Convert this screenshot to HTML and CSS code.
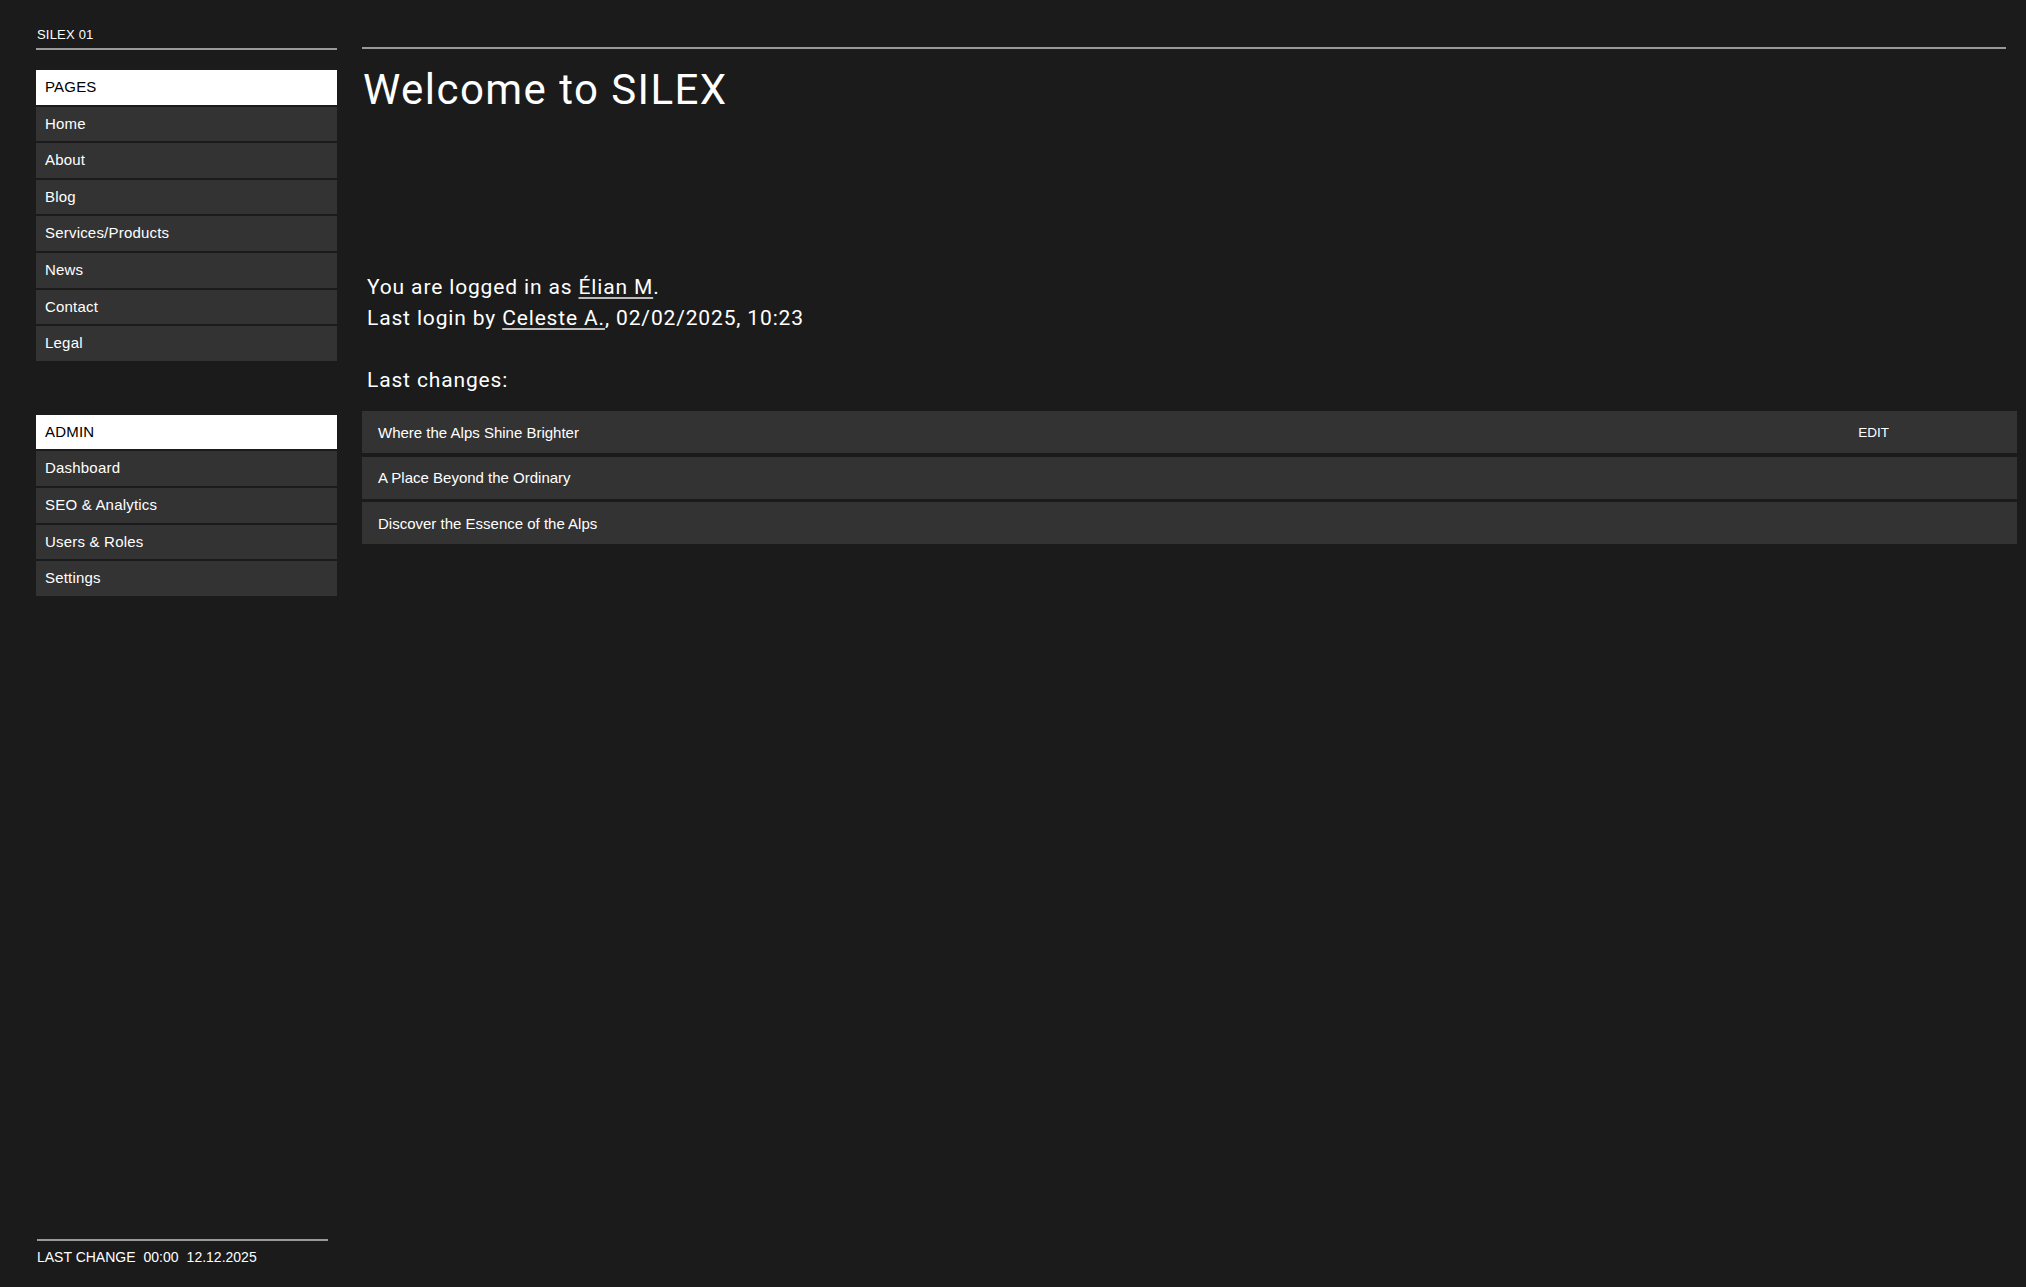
FILE: index.html
```html
<!DOCTYPE html>
<html lang="en">
<head>
<meta charset="utf-8">
<title>SILEX</title>
<link rel="stylesheet" href="styles.css">
</head>
<body>
<aside class="sidebar">
  <div class="brand">SILEX 01</div>
  <nav class="group">
    <div class="group-head">PAGES</div>
    <a class="item" href="#">Home</a>
    <a class="item" href="#">About</a>
    <a class="item" href="#">Blog</a>
    <a class="item" href="#">Services/Products</a>
    <a class="item" href="#">News</a>
    <a class="item" href="#">Contact</a>
    <a class="item" href="#">Legal</a>
  </nav>
  <nav class="group group-admin">
    <div class="group-head">ADMIN</div>
    <a class="item" href="#">Dashboard</a>
    <a class="item" href="#">SEO &amp; Analytics</a>
    <a class="item" href="#">Users &amp; Roles</a>
    <a class="item" href="#">Settings</a>
  </nav>
  <footer class="foot">
    <span>LAST CHANGE</span>
    <span>00:00</span>
    <span>12.12.2025</span>
  </footer>
</aside>
<main class="main">
  <div class="rule"></div>
  <h1 class="title">Welcome to SILEX</h1>
  <div class="info">
    <p>You are logged in as <a href="#">Élian M</a>.</p>
    <p>Last login by <a href="#">Celeste A.</a>, 02/02/2025, 10:23</p>
    <p class="changes">Last changes:</p>
  </div>
  <ul class="rows">
    <li class="row"><span>Where the Alps Shine Brighter</span><span class="edit">EDIT</span></li>
    <li class="row"><span>A Place Beyond the Ordinary</span></li>
    <li class="row"><span>Discover the Essence of the Alps</span></li>
  </ul>
</main>
</body>
</html>
```

FILE: styles.css
```css
* { box-sizing: border-box; }

html, body {
  margin: 0;
  padding: 0;
  height: 100%;
}

body {
  background: #1b1b1b;
  color: #fff;
  font-family: "Liberation Sans", Arial, sans-serif;
  display: flex;
  height: 100vh;
  overflow: hidden;
}

.sidebar {
  width: 301px;
  margin-left: 36px;
  padding-top: 27px;
  display: flex;
  flex-direction: column;
  flex: none;
}

.brand {
  font-size: 13px;
  line-height: 16px;
  padding-left: 1px;
  padding-bottom: 5px;
  letter-spacing: 0.2px;
  border-bottom: 2px solid #9a9a9a;
}

.group {
  display: flex;
  flex-direction: column;
  gap: 2px;
  margin-top: 20px;
}

.group-admin {
  margin-top: 54px;
}

.group-head,
.item {
  height: 34.6px;
  line-height: 33px;
  padding-left: 9px;
  font-size: 15px;
  letter-spacing: 0.2px;
}

.group-head {
  background: #fff;
  color: #000;
}

.item {
  background: #333;
  color: #fff;
  text-decoration: none;
}

.foot {
  margin-top: auto;
  width: 291px;
  margin-left: 1px;
  border-top: 2px solid #9a9a9a;
  padding-top: 8px;
  padding-bottom: 22px;
  font-size: 14px;
  line-height: 16px;
  display: flex;
  gap: 8px;
}

.main {
  flex: 1;
  margin-left: 25px;
  padding-right: 9px;
  padding-top: 47px;
  font-family: Roboto, "Liberation Sans", sans-serif;
}

.rule {
  height: 2px;
  background: #9a9a9a;
  margin-right: 11px;
}

.title {
  margin: 16px 0 0 1px;
  font-size: 42px;
  line-height: 50px;
  font-weight: 400;
  letter-spacing: 1.45px;
}

.info {
  margin-top: 157px;
  padding-left: 5px;
  font-size: 21px;
  line-height: 31px;
  letter-spacing: 0.85px;
}

.info p { margin: 0; }

.info a {
  color: #fff;
  text-decoration: underline;
  text-decoration-color: #bbb;
  text-decoration-thickness: 1.5px;
  text-underline-offset: 3px;
}

.info .changes { margin-top: 31px; }

.rows {
  list-style: none;
  margin: 15px 0 0;
  padding: 0;
  display: flex;
  flex-direction: column;
  gap: 3.5px;
  font-family: "Liberation Sans", Arial, sans-serif;
  font-size: 15px;
}

.row {
  height: 42px;
  background: #333;
  display: flex;
  align-items: center;
  justify-content: space-between;
  padding: 0 128px 0 16px;
}

.edit { font-size: 13.5px; }
```
